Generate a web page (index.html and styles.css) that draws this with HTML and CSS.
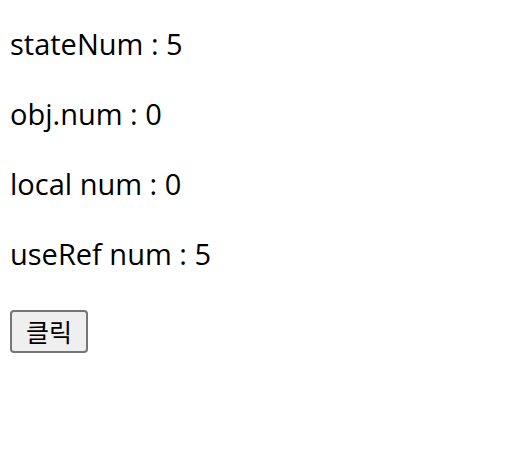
FILE: index.html
```html
<!DOCTYPE html>
<html lang="ko">
<head>
    <meta charset="UTF-8">
    <meta name="viewport" content="width=device-width, initial-scale=1.0">
    <link rel="stylesheet" href="styles.css">
    <title>useRef</title>
</head>
<body>
    <div class="app">
        <p class="line">stateNum : 5</p>
        <p class="line">obj.num : 0</p>
        <p class="line">local num : 0</p>
        <p class="line">useRef num : 5</p>
        <button class="btn">클릭</button>
    </div>
</body>
</html>
```

FILE: styles.css
```css
body {
    margin: 0;
    font-family: "Open Sans", "Noto Sans CJK KR", sans-serif;
    color: #000;
}

.app {
    display: flex;
    flex-direction: column;
    align-items: flex-start;
    gap: 35px;
    padding: 26px 10px;
}

.line {
    margin: 0;
    font-size: 29px;
    line-height: 35px;
}

.btn {
    margin-top: 4px;
    font-family: "Noto Sans CJK KR", sans-serif;
    font-size: 25px;
    line-height: 35px;
    padding: 2px 14px;
    border: 2px solid #767676;
    border-radius: 4px;
    background-color: #efefef;
    color: #000;
}
```
